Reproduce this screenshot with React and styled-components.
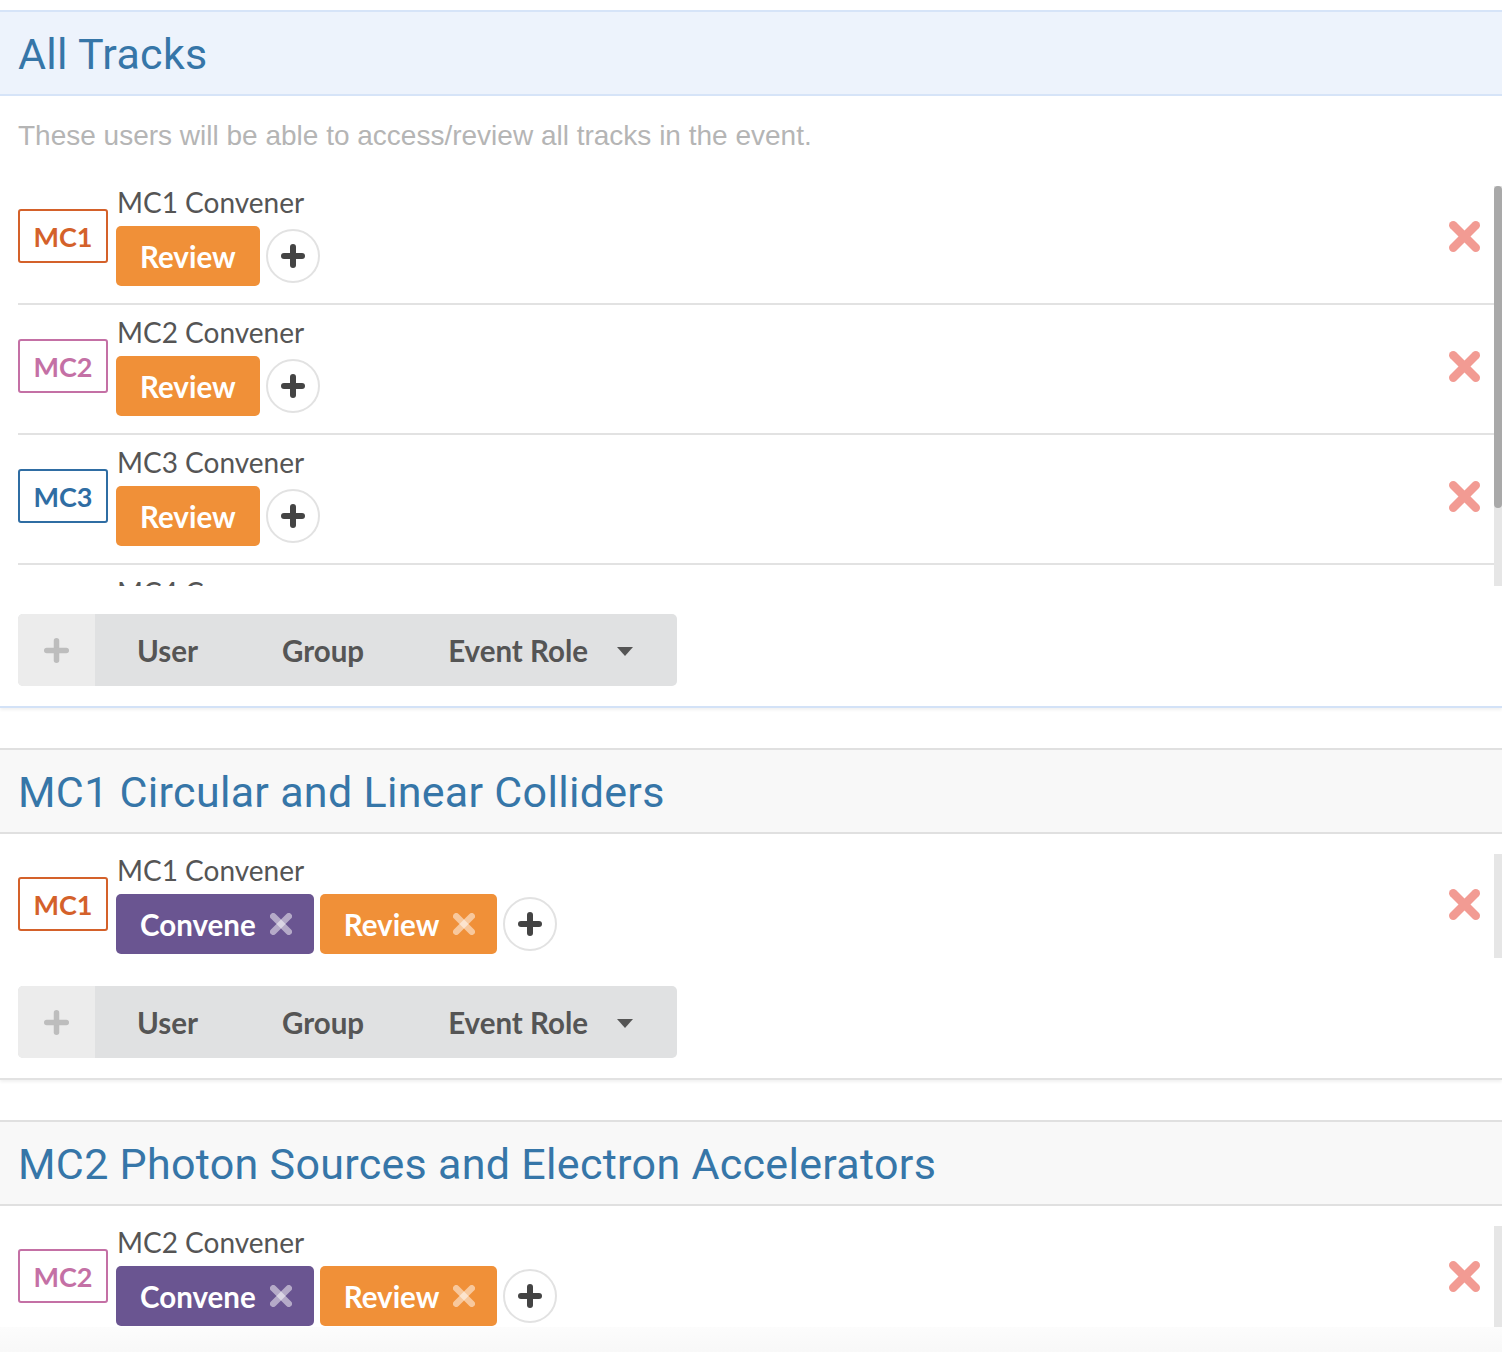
import React from "react";
import styled, { createGlobalStyle } from "styled-components";

const Global = createGlobalStyle`
  html, body { margin: 0; padding: 0; overflow: hidden; background: #fff; }
  body { font-family: Lato, "Liberation Sans", sans-serif; }
  * { box-sizing: border-box; }
`;

const Page = styled.div`
  padding-top: 10px;
  width: 1502px;
`;

const Section = styled.section`
  border-bottom: 2px solid ${(p) => (p.$variant === "all" ? "#d3e2f7" : "#e2e2e2")};
  box-shadow: 0 2px 3px rgba(0, 0, 0, 0.06);
  margin-bottom: 40px;
  padding-bottom: 20px;
`;

const SectionHeader = styled.header`
  height: 86px;
  display: flex;
  align-items: center;
  padding: 1px 18px 0;
  background: ${(p) => (p.$variant === "all" ? "#edf3fc" : "#f8f8f8")};
  border-top: 2px solid ${(p) => (p.$variant === "all" ? "#d6e4f8" : "#e0e0e0")};
  border-bottom: 2px solid ${(p) => (p.$variant === "all" ? "#d6e4f8" : "#e0e0e0")};
`;

const Title = styled.h2`
  margin: 0;
  font-family: Roboto, "Liberation Sans", sans-serif;
  font-weight: 400;
  font-size: 43px;
  color: #3676a8;
  letter-spacing: 0.3px;
`;

const SectionBody = styled.div`
  padding-top: 20px;
`;

const Description = styled.p`
  margin: 4px 0 34px 18px;
  font-family: "Liberation Sans", Arial, sans-serif;
  font-size: 28px;
  line-height: 32px;
  color: #b5b5b5;
`;

const ListFrame = styled.div`
  display: flex;
  margin: 0 0 28px 18px;
`;

const Viewport = styled.div`
  flex: 1;
  min-width: 0;
  max-height: ${(p) => p.$maxHeight}px;
  overflow: hidden;
`;

const Track = styled.div`
  width: 8px;
  flex: none;
  background: #e6e6e6;
`;

const Thumb = styled.div`
  height: ${(p) => p.$size}px;
  background: #a9a9a9;
  border-radius: 4px;
`;

const Row = styled.div`
  display: flex;
  align-items: center;
  padding-bottom: 4px;
  & + & {
    margin-top: 13px;
    border-top: 2px solid #e2e2e2;
    padding-top: 11px;
  }
`;

const Badge = styled.div`
  width: 90px;
  height: 54px;
  flex: none;
  margin-right: 8px;
  border: 2px solid ${(p) => p.$color};
  border-radius: 3px;
  color: ${(p) => p.$color};
  display: flex;
  align-items: center;
  justify-content: center;
  font-family: Lato, sans-serif;
  font-weight: 700;
  font-size: 27px;
`;

const Info = styled.div`
  display: flex;
  flex-direction: column;
`;

const Name = styled.div`
  font-family: Lato, sans-serif;
  font-size: 28px;
  line-height: 32px;
  color: #555;
  padding-left: 1px;
`;

const Tags = styled.div`
  margin-top: 8px;
  display: flex;
  align-items: center;
  gap: 6px;
`;

const Tag = styled.div`
  height: 60px;
  padding: 0 ${(p) => (p.$removable ? 22 : 24)}px 0 24px;
  border-radius: 5px;
  background: ${(p) => p.$bg};
  color: #fff;
  font-family: Lato, sans-serif;
  font-weight: 700;
  font-size: 29.5px;
  display: flex;
  align-items: center;
  gap: 14px;
`;

const AddRole = styled.div`
  width: 54px;
  height: 54px;
  border-radius: 50%;
  border: 2px solid #e2e2e2;
  background: #fff;
  display: flex;
  align-items: center;
  justify-content: center;
`;

const RemoveWrap = styled.div`
  margin-left: auto;
  margin-right: 14px;
  display: flex;
`;

const AddBar = styled.div`
  margin-left: 18px;
  width: 659px;
  height: 72px;
  display: flex;
  border-radius: 5px;
  overflow: hidden;
  background: #e0e1e2;
`;

const AddIcon = styled.div`
  width: 77px;
  background: #ececec;
  display: flex;
  align-items: center;
  justify-content: center;
`;

const MenuItem = styled.div`
  display: flex;
  align-items: center;
  padding: 0 42px;
  gap: 29px;
  font-family: Lato, sans-serif;
  font-weight: 700;
  font-size: 29.5px;
  color: #555;
`;

const Caret = styled.span`
  width: 0;
  height: 0;
  border-left: 8.5px solid transparent;
  border-right: 8.5px solid transparent;
  border-top: 9px solid #555;
  margin-top: 2px;
`;

const BottomFade = styled.div`
  position: fixed;
  left: 0;
  right: 0;
  bottom: 0;
  height: 25px;
  background: linear-gradient(to bottom, #fcfcfc, #f8f8f8);
`;

function Cross({ size, stroke, color }) {
  const p = stroke / 2;
  return (
    <svg width={size} height={size} viewBox={`0 0 ${size} ${size}`}>
      <g stroke={color} strokeWidth={stroke} strokeLinecap="round">
        <line x1={p} y1={p} x2={size - p} y2={size - p} />
        <line x1={size - p} y1={p} x2={p} y2={size - p} />
      </g>
    </svg>
  );
}

function Plus({ size, stroke, color }) {
  const p = stroke / 2;
  const c = size / 2;
  return (
    <svg width={size} height={size} viewBox={`0 0 ${size} ${size}`}>
      <g stroke={color} strokeWidth={stroke} strokeLinecap="round">
        <line x1={c} y1={p} x2={c} y2={size - p} />
        <line x1={p} y1={c} x2={size - p} y2={c} />
      </g>
    </svg>
  );
}

const COLORS = {
  MC1: "#d4612a",
  MC2: "#c470a5",
  MC3: "#2f6da3",
  MC4: "#4a9a5c",
};

const ROLES = {
  Convene: "#6a5591",
  Review: "#f09038",
};

function Principal({ code, roles, removable }) {
  return (
    <Row>
      <Badge $color={COLORS[code]}>{code}</Badge>
      <Info>
        <Name>{code} Convener</Name>
        <Tags>
          {roles.map((r) => (
            <Tag key={r} $bg={ROLES[r]} $removable={removable}>
              {r}
              {removable && <Cross size={22} stroke={6.5} color="rgba(255,255,255,0.5)" />}
            </Tag>
          ))}
          <AddRole>
            <Plus size={24} stroke={6} color="#444" />
          </AddRole>
        </Tags>
      </Info>
      <RemoveWrap>
        <Cross size={31} stroke={8.5} color="#f29b93" />
      </RemoveWrap>
    </Row>
  );
}

function PrincipalList({ height, thumb, children }) {
  return (
    <ListFrame>
      <Viewport $maxHeight={height}>{children}</Viewport>
      <Track>{thumb ? <Thumb $size={thumb} /> : null}</Track>
    </ListFrame>
  );
}

function AddPrincipal() {
  return (
    <AddBar>
      <AddIcon>
        <Plus size={25} stroke={5.5} color="#bdbdbd" />
      </AddIcon>
      <MenuItem>User</MenuItem>
      <MenuItem>Group</MenuItem>
      <MenuItem>
        Event Role
        <Caret />
      </MenuItem>
    </AddBar>
  );
}

export default function App() {
  return (
    <>
      <Global />
      <Page>
        <Section $variant="all">
          <SectionHeader $variant="all">
            <Title>All Tracks</Title>
          </SectionHeader>
          <SectionBody>
            <Description>
              These users will be able to access/review all tracks in the event.
            </Description>
            <PrincipalList height={400} thumb={322}>
              {["MC1", "MC2", "MC3", "MC4"].map((c) => (
                <Principal key={c} code={c} roles={["Review"]} />
              ))}
            </PrincipalList>
            <AddPrincipal />
          </SectionBody>
        </Section>

        <Section>
          <SectionHeader>
            <Title>MC1 Circular and Linear Colliders</Title>
          </SectionHeader>
          <SectionBody>
            <PrincipalList height={400}>
              <Principal code="MC1" roles={["Convene", "Review"]} removable />
            </PrincipalList>
            <AddPrincipal />
          </SectionBody>
        </Section>

        <Section>
          <SectionHeader>
            <Title>MC2 Photon Sources and Electron Accelerators</Title>
          </SectionHeader>
          <SectionBody>
            <PrincipalList height={400}>
              <Principal code="MC2" roles={["Convene", "Review"]} removable />
            </PrincipalList>
            <AddPrincipal />
          </SectionBody>
        </Section>
      </Page>
      <BottomFade />
    </>
  );
}
